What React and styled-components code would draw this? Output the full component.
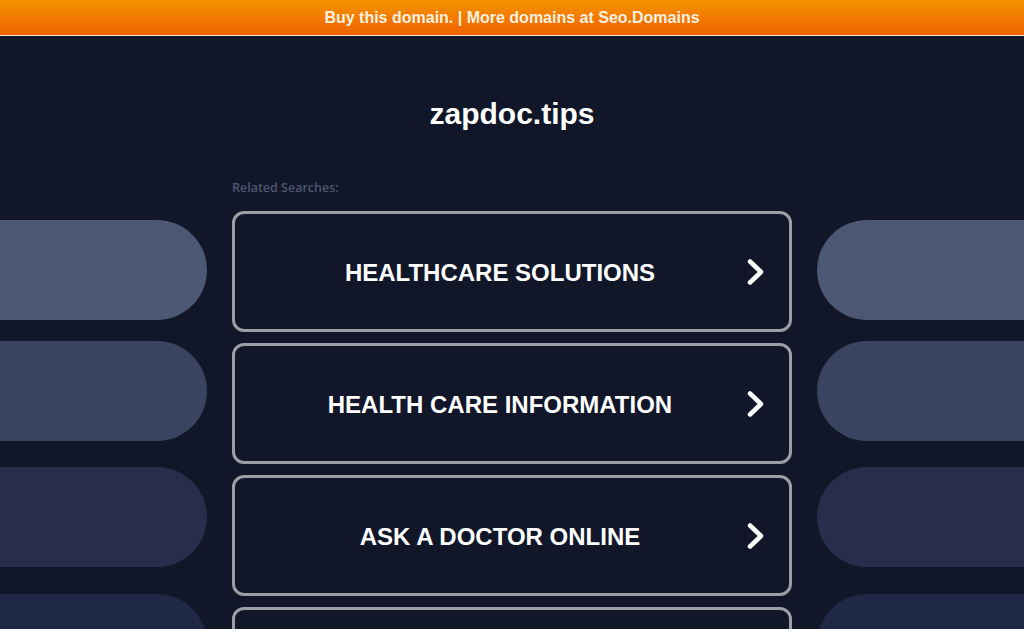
import React from 'react'
import styled, { createGlobalStyle } from 'styled-components'

const GlobalStyle = createGlobalStyle`
    html, body {
        margin: 0;
        padding: 0;
        background: #111729;
        overflow: hidden;
    }
`

const Page = styled.div`
    width: 1024px;
    height: 629px;
    overflow: hidden;
    background: #111729;
    font-family: 'Liberation Sans', Arial, sans-serif;
`

const TopBar = styled.div`
    height: 35px;
    border-bottom: 1px solid #fbe3cf;
    background: linear-gradient(to bottom, #f59300, #ee6200);
    display: flex;
    align-items: center;
    justify-content: center;
    color: #fdf0e0;
    font-weight: bold;
    font-size: 16px;
`

const Title = styled.h1`
    margin: 0;
    padding-top: 60px;
    height: 85px;
    box-sizing: content-box;
    text-align: center;
    color: #ffffff;
    font-size: 30px;
    line-height: 36px;
    font-weight: bold;
`

const Layout = styled.div`
    display: grid;
    grid-template-columns: 207px 560px 1fr;
    column-gap: 25px;
`

const Side = styled.div`
    display: flex;
    flex-direction: column;
    padding-top: 39px;
`

const Pill = styled.div`
    height: 100px;
    margin-bottom: ${p => p.$gap}px;
    background: ${p => p.$color};
    border-radius: ${p => (p.$right ? '50px 0 0 50px' : '0 50px 50px 0')};
`

const Center = styled.div`
    display: flex;
    flex-direction: column;
`

const Label = styled.div`
    font-family: 'Open Sans', 'Noto Sans', sans-serif;
    font-size: 12.5px;
    font-weight: 600;
    color: #4d5670;
    height: 30px;
    line-height: 14px;
`

const Card = styled.a`
    box-sizing: border-box;
    height: 121px;
    margin-bottom: 11px;
    border: 3px solid #9b9ea4;
    border-radius: 12px;
    display: flex;
    align-items: center;
    text-decoration: none;
    color: #ffffff;
`

const CardText = styled.span`
    flex: 1;
    text-align: center;
    padding-left: 20px;
    padding-top: 2px;
    font-size: 24px;
    font-weight: bold;
`

const Chevron = styled.svg`
    width: 22px;
    height: 30px;
    margin-right: 22px;
`

const pills = [
    { color: '#4c5774', gap: 21 },
    { color: '#3a4460', gap: 26 },
    { color: '#262e4b', gap: 27 },
    { color: '#1f2845', gap: 0 },
]

const searches = [
    'HEALTHCARE SOLUTIONS',
    'HEALTH CARE INFORMATION',
    'ASK A DOCTOR ONLINE',
    'MEDICAL SERVICES',
]

export default function App() {
    return (
        <Page>
            <GlobalStyle />
            <TopBar>Buy this domain. | More domains at Seo.Domains</TopBar>
            <Title>zapdoc.tips</Title>
            <Layout>
                <Side>
                    {pills.map((p, i) => (
                        <Pill key={i} $color={p.color} $gap={p.gap} />
                    ))}
                </Side>
                <Center>
                    <Label>Related Searches:</Label>
                    {searches.map(s => (
                        <Card key={s} href="#">
                            <CardText>{s}</CardText>
                            <Chevron viewBox="0 0 22 30">
                                <path d="M5 4.5 L16 15 L5 25.5" fill="none" stroke="#fff" strokeWidth="4.5" strokeLinecap="round" strokeLinejoin="round" />
                            </Chevron>
                        </Card>
                    ))}
                </Center>
                <Side>
                    {pills.map((p, i) => (
                        <Pill key={i} $right $color={p.color} $gap={p.gap} />
                    ))}
                </Side>
            </Layout>
        </Page>
    )
}
